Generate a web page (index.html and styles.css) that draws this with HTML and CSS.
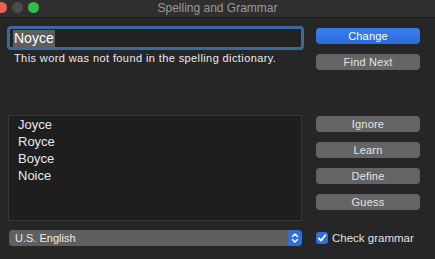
FILE: index.html
```html
<!DOCTYPE html>
<html>
<head>
<meta charset="utf-8">
<link rel="stylesheet" href="styles.css">
</head>
<body>
<div class="window">
  <div class="titlebar">
    <div class="lights">
      <span class="light red"></span>
      <span class="light gray"></span>
      <span class="light green"></span>
    </div>
    <div class="title">Spelling and Grammar</div>
    <div></div>
  </div>
  <div class="content">
    <div class="section top">
      <div class="col">
        <div class="field"><span class="sel">Noyce</span></div>
        <div class="message">This word was not found in the spelling dictionary.</div>
      </div>
      <div class="col buttons-top">
        <div class="btn primary">Change</div>
        <div class="btn">Find Next</div>
      </div>
    </div>
    <div class="section middle">
      <div class="list">
        <div class="item">Joyce</div>
        <div class="item">Royce</div>
        <div class="item">Boyce</div>
        <div class="item">Noice</div>
      </div>
      <div class="col buttons-mid">
        <div class="btn">Ignore</div>
        <div class="btn">Learn</div>
        <div class="btn">Define</div>
        <div class="btn">Guess</div>
      </div>
    </div>
    <div class="section bottom">
      <div class="popup">
        <span>U.S. English</span>
        <span class="stepper">
          <svg width="14" height="16" viewBox="0 0 14 16"><path d="M4.5 6.5 L7 4 L9.5 6.5 M4.5 9.5 L7 12 L9.5 9.5" fill="none" stroke="#fff" stroke-width="1.5" stroke-linecap="round" stroke-linejoin="round"/></svg>
        </span>
      </div>
      <label class="check">
        <span class="box"><svg width="12" height="12" viewBox="0 0 12 12"><path d="M2.8 6.3 L5 8.7 L9.3 3.2" fill="none" stroke="#fff" stroke-width="1.8" stroke-linecap="round" stroke-linejoin="round"/></svg></span>
        <span>Check grammar</span>
      </label>
    </div>
  </div>
</div>
</body>
</html>
```

FILE: styles.css
```css
* { box-sizing: border-box; }
html, body { margin: 0; padding: 0; }
body {
  width: 435px;
  height: 259px;
  overflow: hidden;
  background: #262626;
  font-family: "Liberation Sans", Arial, sans-serif;
  color: #e6e6e6;
}
.window { width: 435px; height: 259px; }
.titlebar {
  height: 18px;
  background: #2f2f2f;
  border-bottom: 1px solid #1a1a1a;
  display: grid;
  grid-template-columns: 1fr auto 1fr;
  align-items: center;
}
.lights { display: flex; gap: 5px; margin-left: -4px; margin-top: -3px; }
.light { width: 11px; height: 11px; border-radius: 50%; display: block; }
.red { background: #ec5f57; }
.gray { background: #4b4b4b; }
.green { background: #30c047; }
.title {
  font-size: 12px;
  color: #9a9a9a;
  margin-top: -2px;
}
.content { padding: 8px 0 0 7px; }
.section {
  display: grid;
  grid-template-columns: 297px 104px;
  column-gap: 12px;
}
.col { display: flex; flex-direction: column; }
.field {
  height: 24px;
  border: 3px solid #3a6a9c;
  border-radius: 4px;
  background: #222;
  padding: 1px 0 0 3px;
  font-size: 14px;
  line-height: 17px;
  color: #fff;
}
.sel { background: #5e5e5e; padding: 0 1px; display: inline-block; }
.message {
  font-size: 11px;
  line-height: 14px;
  letter-spacing: 0.4px;
  margin: 1px 0 0 7px;
  color: #ececec;
}
.btn {
  height: 16px;
  border-radius: 4px;
  background: #646464;
  color: #e4e4e4;
  font-size: 11px;
  line-height: 16px;
  letter-spacing: 0.2px;
  text-align: center;
}
.btn.primary { background: linear-gradient(#3a7ff0, #2b6ad6); color: #fff; }
.buttons-top { padding-top: 2px; gap: 10px; }
.middle { margin-top: 45px; }
.list {
  margin-left: 1px;
  width: 294px;
  height: 106px;
  background: #1e1e1e;
  border: 1px solid #393939;
  padding-left: 9px;
}
.item { font-size: 13px; line-height: 17px; color: #e8e8e8; }
.buttons-mid { padding-top: 1px; gap: 10px; }
.bottom { margin-top: 9px; align-items: center; }
.popup {
  margin-left: 2px;
  width: 293px;
  height: 16px;
  border-radius: 4px;
  background: #5f5f5f;
  display: flex;
  justify-content: space-between;
  align-items: center;
  padding-left: 6px;
  font-size: 11px;
  color: #ececec;
}
.stepper {
  width: 14px;
  height: 16px;
  background: #2e6fdc;
  border-radius: 4px;
  display: flex;
}
.check {
  display: flex;
  align-items: center;
  gap: 4px;
  font-size: 11.5px;
  color: #e2e2e2;
}
.box {
  width: 12px;
  height: 12px;
  border-radius: 3px;
  background: #2e6fdc;
  display: flex;
}
```
